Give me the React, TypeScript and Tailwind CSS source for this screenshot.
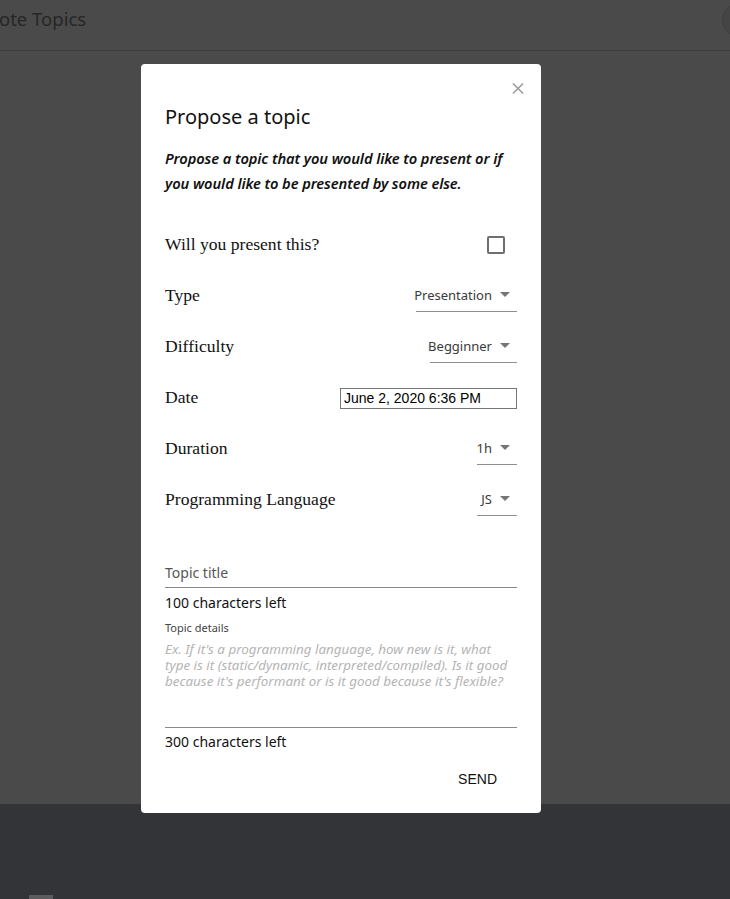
import React from "react";

function Caret() {
  return (
    <svg width="10" height="5" viewBox="0 0 10 5" className="ml-[8px]">
      <path d="M0 0 L10 0 L5 5 Z" fill="#757575" />
    </svg>
  );
}

function SelectField({ value, width }: { value: string; width: string }) {
  return (
    <div className={`${width} flex items-center justify-end border-b border-[#8f8f8f] pb-[6px] pt-[5px]`}>
      <span className="text-[13px] text-[#3a3a3a] leading-[20px]" style={{ fontFamily: '"Noto Sans", sans-serif' }}>
        {value}
      </span>
      <span className="mr-[7px] flex items-center">
        <Caret />
      </span>
    </div>
  );
}

function Row({ label, children }: { label: string; children: React.ReactNode }) {
  return (
    <div className="flex h-[51px] items-center justify-between">
      <span className="text-[17.6px] text-[#111]" style={{ fontFamily: '"Liberation Serif", serif' }}>
        {label}
      </span>
      {children}
    </div>
  );
}

export default function App() {
  return (
    <div className="relative h-[899px] w-[730px] overflow-hidden bg-[#333438]">
      <div className="h-[804px] bg-[#4a4a4a]">
        <div className="relative h-[51px] border-b border-[#3e3e3e]">
          <span
            className="absolute left-[-1px] top-[5px] text-[18.5px] text-[#262626]"
            style={{ fontFamily: '"Noto Sans", sans-serif' }}
          >
            ote Topics
          </span>
          <div className="absolute left-[722px] top-[3px] h-[34px] w-[34px] rounded-full bg-[#454545] border border-[#404040]" />
        </div>
      </div>
      <div className="absolute bottom-0 left-[29px] h-[4px] w-[24px] bg-[#5c5c5e]" />

      <div
        className="absolute left-[141px] top-[64px] h-[749px] w-[400px] rounded-[4px] bg-white px-[24px]"
        style={{ fontFamily: '"Noto Sans", sans-serif' }}
      >
        <button className="absolute right-[17px] top-[18px] flex h-[12px] w-[12px] items-center justify-center">
          <svg width="13" height="13" viewBox="0 0 13 13">
            <path d="M1 1 L12 12 M12 1 L1 12" stroke="#9a9a9a" strokeWidth="1.6" />
          </svg>
        </button>

        <h2 className="pt-[39px] text-[20px] leading-[28px] text-[#111]">Propose a topic</h2>
        <p className="mt-[15px] text-[14.7px] font-semibold italic leading-[25px] text-[#111] tracking-[-0.1px]">
          Propose a topic that you would like to present or if you would like to be presented by some else.
        </p>

        <div className="mt-[23px]">
          <Row label="Will you present this?">
            <div className="mr-[12px] h-[18px] w-[18px] rounded-[2px] border-2 border-[#6e6e6e]" />
          </Row>
          <Row label="Type">
            <SelectField value="Presentation" width="w-[101px]" />
          </Row>
          <Row label="Difficulty">
            <SelectField value="Begginner" width="w-[87px]" />
          </Row>
          <Row label="Date">
            <div
              className="mt-[2px] flex h-[21px] w-[177px] items-center border border-[#767676] px-[3px] text-[14px] text-black"
              style={{ fontFamily: '"Liberation Sans", Arial, sans-serif' }}
            >
              June 2, 2020 6:36 PM
            </div>
          </Row>
          <Row label="Duration">
            <SelectField value="1h" width="w-[40px]" />
          </Row>
          <Row label="Programming Language">
            <SelectField value="JS" width="w-[40px]" />
          </Row>
        </div>

        <div className="mt-[35px] border-b border-[#8a8a8a] pb-[3px]">
          <span className="text-[14px] leading-[20px] text-[#555]">Topic title</span>
        </div>
        <div className="mt-[5px] text-[14px] leading-[20px] text-[#111]">100 characters left</div>
        <div className="mt-[7px] text-[11px] leading-[15px] text-[#444]">Topic details</div>
        <div className="mt-[6px] h-[87px] border-b border-[#8a8a8a] text-[13.4px] italic leading-[16px] text-[#b4b4b4]">
          Ex. If it's a programming language, how new is it, what type is it (static/dynamic, interpreted/compiled). Is it good because it's performant or is it good because it's flexible?
        </div>
        <div className="mt-[4px] text-[14px] leading-[20px] text-[#111]">300 characters left</div>

        <div className="mt-[17px] flex justify-end pr-[20px]">
          <span
            className="text-[14px] leading-[20px] text-[#111]"
            style={{ fontFamily: '"Liberation Sans", Arial, sans-serif' }}
          >
            SEND
          </span>
        </div>
      </div>
    </div>
  );
}
